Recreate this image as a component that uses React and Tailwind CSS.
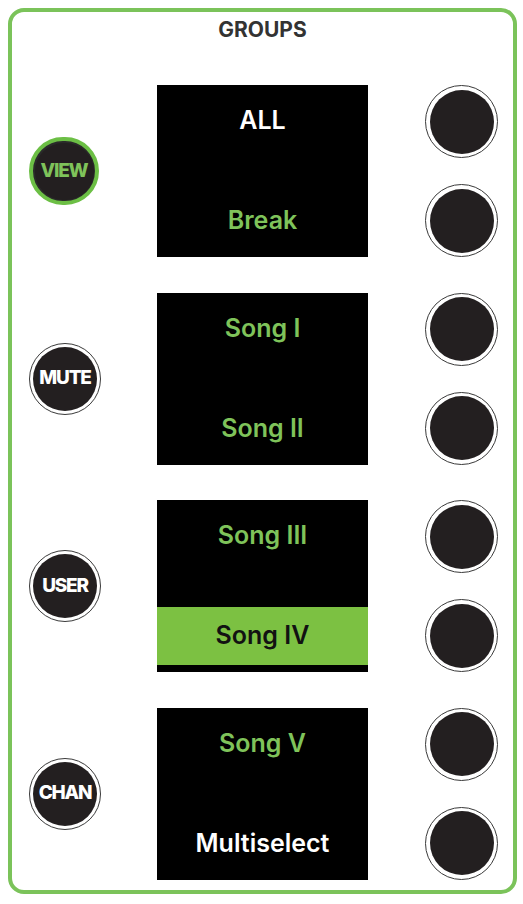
const ROWS = [
  { button: "VIEW", active: true, top: { text: "ALL", tone: "white" }, bottom: { text: "Break", tone: "green" } },
  { button: "MUTE", top: { text: "Song I", tone: "green" }, bottom: { text: "Song II", tone: "green" } },
  { button: "USER", top: { text: "Song III", tone: "green" }, bottom: { text: "Song IV", tone: "selected" } },
  { button: "CHAN", top: { text: "Song V", tone: "green" }, bottom: { text: "Multiselect", tone: "white" } },
];

const TONE = {
  white: "text-white",
  green: "text-[#7fc35a]",
  selected: "bg-[#7cc142] text-[#121212]",
};

function SideButton({ label, active }) {
  // active button gets the green ring, the rest a thin dark one
  if (active) {
    return (
      <div className="w-[70px] h-[68px] rounded-full border-[4px] border-[#6cbf45] p-[1.5px] bg-[#2a2a2a] shrink-0">
        <div className="w-full h-full rounded-full bg-[#231f20] flex items-center justify-center">
          <span className="text-[19px] font-extrabold tracking-[-1.2px] text-[#7fc35a]">{label}</span>
        </div>
      </div>
    );
  }
  return (
    <div className="w-[72px] h-[72px] rounded-full border-[1.5px] border-[#3a3a3a] p-[3px] bg-white shrink-0">
      <div className="w-full h-full rounded-full bg-[#231f20] flex items-center justify-center">
        <span className="text-[19px] font-extrabold tracking-[-1.2px] text-white">{label}</span>
      </div>
    </div>
  );
}

function Knob() {
  return (
    <div className="w-[73px] h-[73px] rounded-full border-[1.5px] border-[#3a3a3a] p-[3.5px] bg-white">
      <div className="w-full h-full rounded-full bg-[#231f20]" />
    </div>
  );
}

function Screen({ top, bottom }) {
  return (
    <div className="w-[211px] h-[172px] bg-black flex flex-col shrink-0">
      <div className={`h-[72px] flex items-center justify-center text-[25px] font-semibold ${TONE[top.tone]}`}>
        {top.text}
      </div>
      <div className="flex-1" />
      <div className={`h-[58px] mb-[7px] flex items-center justify-center text-[25px] font-semibold ${TONE[bottom.tone]}`}>
        {bottom.text}
      </div>
    </div>
  );
}

export default function App() {
  return (
    <div className="w-[523px] h-[904px] bg-white pt-[8px] pl-[8px]" style={{ fontFamily: "Inter, 'Liberation Sans', sans-serif" }}>
      <div className="w-[509px] h-[886px] border-[4px] border-[#7bc35a] rounded-[16px] flex flex-col">
        <div className="h-[73px] flex justify-center pt-[6px]">
          <span className="text-[21px] leading-[24px] font-bold text-[#333333]">GROUPS</span>
        </div>
        <div className="flex flex-col gap-[35.5px]">
          {ROWS.map((row) => (
            <div key={row.button} className="h-[172px] flex items-center pl-[17px]">
              <SideButton label={row.button} active={row.active} />
              <div className={row.active ? "ml-[58px]" : "ml-[56px]"}>
                <Screen top={row.top} bottom={row.bottom} />
              </div>
              <div className="ml-[57px] h-full flex flex-col justify-between">
                <Knob />
                <Knob />
              </div>
            </div>
          ))}
        </div>
      </div>
    </div>
  );
}
